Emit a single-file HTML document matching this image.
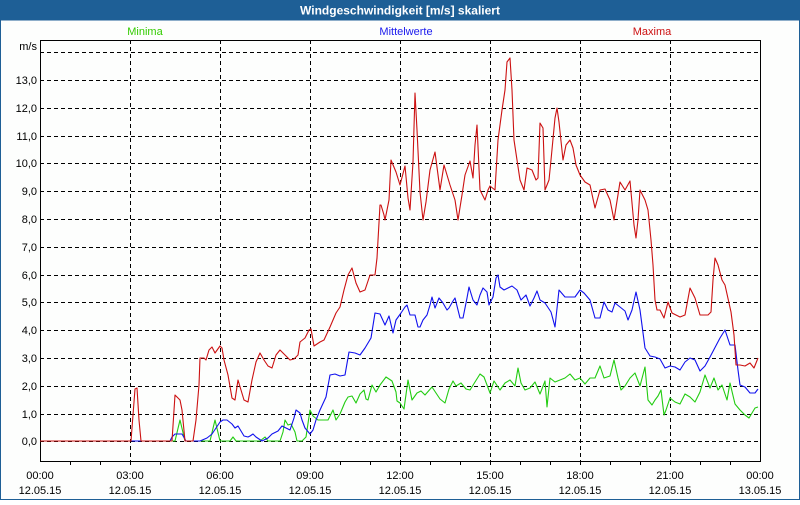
<!DOCTYPE html>
<html><head><meta charset="utf-8"><style>
html,body{margin:0;padding:0;background:#fff;}
body{width:800px;height:500px;overflow:hidden;position:relative;font-family:"Liberation Sans",Tahoma,sans-serif;}
svg text{font-family:"Liberation Sans",sans-serif;}
</style></head><body>
<svg width="800" height="500" viewBox="0 0 800 500" xmlns="http://www.w3.org/2000/svg">
<rect x="0" y="0" width="800" height="500" fill="#fdfefd"/>
<rect x="0" y="0" width="800" height="20" fill="#1e5f96"/>
<rect x="0.5" y="20" width="799" height="479.5" fill="none" stroke="#1e5f96" stroke-width="1"/>
<text x="400" y="14.5" text-anchor="middle" font-size="12" font-weight="bold" fill="#fff">Windgeschwindigkeit [m/s] skaliert</text>
<text x="145" y="35" text-anchor="middle" font-size="11" fill="#33cc00">Minima</text>
<text x="406" y="35" text-anchor="middle" font-size="11" fill="#1a1aee">Mittelwerte</text>
<text x="652" y="35" text-anchor="middle" font-size="11" fill="#cc1111">Maxima</text>
<g stroke="#000" stroke-width="1" stroke-dasharray="4,3" fill="none">
<line x1="40" y1="52.5" x2="760" y2="52.5"/>
<line x1="40" y1="80.5" x2="760" y2="80.5"/>
<line x1="40" y1="108.5" x2="760" y2="108.5"/>
<line x1="40" y1="136.5" x2="760" y2="136.5"/>
<line x1="40" y1="163.5" x2="760" y2="163.5"/>
<line x1="40" y1="191.5" x2="760" y2="191.5"/>
<line x1="40" y1="219.5" x2="760" y2="219.5"/>
<line x1="40" y1="247.5" x2="760" y2="247.5"/>
<line x1="40" y1="275.5" x2="760" y2="275.5"/>
<line x1="40" y1="302.5" x2="760" y2="302.5"/>
<line x1="40" y1="330.5" x2="760" y2="330.5"/>
<line x1="40" y1="358.5" x2="760" y2="358.5"/>
<line x1="40" y1="386.5" x2="760" y2="386.5"/>
<line x1="40" y1="414.5" x2="760" y2="414.5"/>
<line x1="40" y1="441.5" x2="760" y2="441.5"/>
<line x1="130.5" y1="40" x2="130.5" y2="461"/>
<line x1="220.5" y1="40" x2="220.5" y2="461"/>
<line x1="310.5" y1="40" x2="310.5" y2="461"/>
<line x1="400.5" y1="40" x2="400.5" y2="461"/>
<line x1="490.5" y1="40" x2="490.5" y2="461"/>
<line x1="580.5" y1="40" x2="580.5" y2="461"/>
<line x1="670.5" y1="40" x2="670.5" y2="461"/>
</g>
<rect x="40.5" y="40.5" width="720" height="421" fill="none" stroke="#000" stroke-width="1"/>
<g stroke="#000" stroke-width="1">
<line x1="70.5" y1="461" x2="70.5" y2="465"/><line x1="100.5" y1="461" x2="100.5" y2="465"/><line x1="130.5" y1="461" x2="130.5" y2="465"/>
<line x1="160.5" y1="461" x2="160.5" y2="465"/><line x1="190.5" y1="461" x2="190.5" y2="465"/><line x1="220.5" y1="461" x2="220.5" y2="465"/>
<line x1="250.5" y1="461" x2="250.5" y2="465"/><line x1="280.5" y1="461" x2="280.5" y2="465"/><line x1="310.5" y1="461" x2="310.5" y2="465"/>
<line x1="340.5" y1="461" x2="340.5" y2="465"/><line x1="370.5" y1="461" x2="370.5" y2="465"/><line x1="400.5" y1="461" x2="400.5" y2="465"/>
<line x1="430.5" y1="461" x2="430.5" y2="465"/><line x1="460.5" y1="461" x2="460.5" y2="465"/><line x1="490.5" y1="461" x2="490.5" y2="465"/>
<line x1="520.5" y1="461" x2="520.5" y2="465"/><line x1="550.5" y1="461" x2="550.5" y2="465"/><line x1="580.5" y1="461" x2="580.5" y2="465"/>
<line x1="610.5" y1="461" x2="610.5" y2="465"/><line x1="640.5" y1="461" x2="640.5" y2="465"/><line x1="670.5" y1="461" x2="670.5" y2="465"/>
<line x1="700.5" y1="461" x2="700.5" y2="465"/><line x1="730.5" y1="461" x2="730.5" y2="465"/>
</g>
<g font-size="11" fill="#000" text-anchor="end">
<text x="37" y="50">m/s</text>
<text x="37" y="84">13,0</text><text x="37" y="112">12,0</text><text x="37" y="140">11,0</text>
<text x="37" y="167">10,0</text><text x="37" y="195">9,0</text><text x="37" y="223">8,0</text>
<text x="37" y="251">7,0</text><text x="37" y="279">6,0</text><text x="37" y="306">5,0</text>
<text x="37" y="334">4,0</text><text x="37" y="362">3,0</text><text x="37" y="390">2,0</text>
<text x="37" y="418">1,0</text><text x="37" y="445">0,0</text>
</g>
<g font-size="11" fill="#000" text-anchor="middle">
<text x="40" y="479">00:00</text><text x="40" y="494">12.05.15</text>
<text x="130" y="479">03:00</text><text x="130" y="494">12.05.15</text>
<text x="220" y="479">06:00</text><text x="220" y="494">12.05.15</text>
<text x="310" y="479">09:00</text><text x="310" y="494">12.05.15</text>
<text x="400" y="479">12:00</text><text x="400" y="494">12.05.15</text>
<text x="490" y="479">15:00</text><text x="490" y="494">12.05.15</text>
<text x="580" y="479">18:00</text><text x="580" y="494">12.05.15</text>
<text x="670" y="479">21:00</text><text x="670" y="494">12.05.15</text>
<text x="760" y="479">00:00</text><text x="760" y="494">13.05.15</text>
</g>
<g fill="none" stroke-width="1.1" stroke-linejoin="round">
<polyline stroke="#22cc11" points="40,441 175,441 180,420 185,441 210,441 215,420 220,441 230,441 233,437 236,441 260,441 265,437 268,441 280,441 283,432 285,420 288,425 291,424 295,432 297,441 302,441 306,437 310,410 313,416 318,420 328,420 333,410 336,420 340,414 345,402 348,397 352,396 356,403 360,394 364,390 366,399 368,400 372,385 376,392 380,385 386,377 392,381 396,392 397,401 400,403 404,409 408,380 412,400 417,393 421,391 425,395 432,387 436,393 440,399 445,403 449,389 453,381 456,386 461,383 466,389 470,390 475,382 480,374 484,377 490,393 494,381 500,390 505,383 510,380 515,386 518,368 521,383 525,390 530,388 535,382 540,394 545,381 547,407 550,378 555,382 560,380 565,378 570,374 575,380 580,378 585,384 590,378 595,378 600,366 604,378 610,376 614,360 618,378 621,390 625,386 630,378 635,373 640,386 645,367 648,400 652,405 655,400 658,396 661,390 664,415 666,410 670,398 675,402 680,404 685,394 690,397 695,402 700,392 705,375 710,388 714,378 718,390 722,385 727,400 730,383 735,404 740,410 745,415 749,418 752,413 755,408 758,407"/>
<polyline stroke="#1111ee" points="40,441 170,441 172,437 175,434 182,434 186,441 200,441 207,438 212,434 216,428 220,422 223,420 227,420 232,424 235,428 238,426 241,431 244,436 248,437 250,436 253,434 256,437 262,441 268,438 272,434 278,431 282,426 286,428 290,430 294,418 296,410 300,413 302,420 305,428 310,434 313,430 316,420 320,410 326,397 330,375 335,374 340,376 345,375 349,352 355,353 360,355 365,348 371,338 375,313 380,314 385,325 389,316 393,333 396,320 401,313 405,307 407,305 410,315 415,315 418,327 420,327 423,320 427,315 430,305 432,297 435,308 439,298 443,303 447,310 449,308 453,301 455,298 460,318 463,318 467,298 469,287 473,300 477,305 480,295 483,288 487,292 489,305 493,297 496,278 498,275 500,287 504,290 512,286 517,290 521,300 526,295 530,306 534,298 537,291 540,300 545,303 551,312 555,327 559,290 565,297 570,297 575,297 580,290 584,293 590,300 595,318 600,318 604,302 608,310 612,312 615,303 620,307 625,311 628,320 632,310 636,292 640,310 645,348 650,356 655,357 660,359 665,368 670,366 675,367 680,370 685,362 690,358 695,360 700,371 705,366 710,357 720,338 725,330 730,345 735,345 738,370 740,385 745,387 750,393 755,393 758,389"/>
<polyline stroke="#cc1111" points="40,441 131,441 135,389 137,388 139,420 141,441 170,441 172,441 175,395 180,400 182,410 185,441 193,441 196,420 199,385 200,358 204,358 206,360 209,350 212,347 215,353 220,346 222,348 224,360 228,375 232,398 235,400 238,380 241,390 244,400 248,402 252,380 256,362 260,353 264,360 268,366 272,368 276,355 280,350 285,355 290,360 294,359 298,355 300,342 305,338 309,330 311,329 314,346 320,342 324,340 330,327 336,313 340,307 344,290 348,275 352,268 356,283 360,292 365,290 370,275 375,275 377,258 380,205 381,205 384,215 385,220 389,200 391,160 396,172 400,185 405,166 408,198 410,210 413,162 415,93 417,130 420,192 423,220 426,202 430,170 435,152 440,190 444,165 450,185 455,200 458,220 462,195 465,175 470,161 473,178 475,145 477,125 480,190 485,200 488,190 490,186 495,190 498,140 502,110 505,90 507,62 510,58 512,90 514,140 520,180 524,190 527,168 532,170 536,180 538,178 540,123 543,128 545,190 549,180 551,160 555,118 557,108 559,122 563,160 566,145 570,140 573,148 576,165 580,175 585,182 590,185 595,208 600,190 605,189 610,200 614,220 620,182 625,190 630,181 634,225 636,238 638,220 640,190 645,200 648,210 651,240 653,265 655,300 657,310 660,310 664,318 668,302 672,313 680,317 685,315 690,288 695,298 700,315 708,315 711,312 713,280 715,258 718,265 722,280 725,285 731,312 734,335 736,365 740,365 745,366 750,363 754,368 758,358"/>
</g>
</svg>
</body></html>
